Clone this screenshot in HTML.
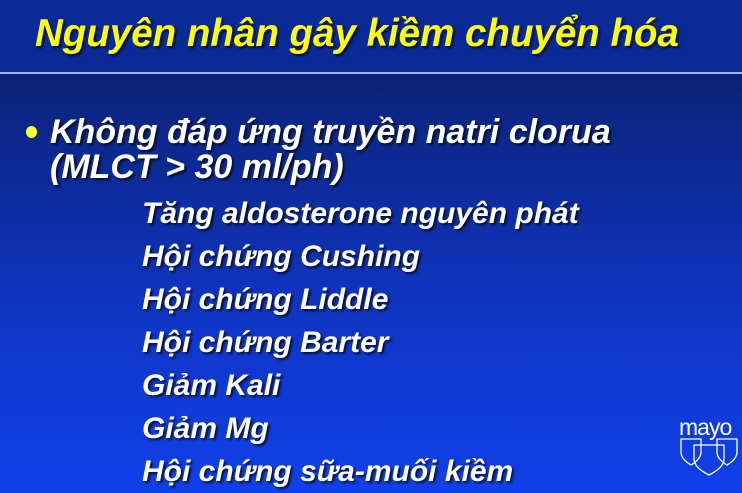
<!DOCTYPE html>
<html><head><meta charset="utf-8"><style>
html,body{margin:0;padding:0}
body{width:742px;height:493px;overflow:hidden;position:relative;font-family:"Liberation Sans",Arial,sans-serif;font-weight:bold;font-style:italic;
background:linear-gradient(#0a1f70 0px,#0a1f70 72px,#0b2580 100px,#0f34c0 300px,#1040ea 493px);}
.title{position:absolute;left:0;top:0;width:742px;height:72px;background:#0a2a98;}
.line{position:absolute;left:0;top:72px;width:742px;height:2px;background:#9fb4f0;}
.t{position:absolute;white-space:nowrap;text-shadow:2px 2px 2px rgba(0,0,0,.7);}
.h{left:35px;top:12px;font-size:38.5px;color:#ffff00;}
.b{left:50px;font-size:34px;color:#fff;}
.s{left:142px;font-size:30px;color:#fff;}
.dot{position:absolute;left:26px;top:126px;width:11px;height:12px;border-radius:50%;background:#ffff33;}
</style></head><body>
<div class="title"></div><div class="line"></div>
<div class="t h">Nguyên nhân gây kiềm chuyển hóa</div>
<div class="dot"></div>
<div class="t b" style="top:113px">Không đáp ứng truyền natri clorua</div>
<div class="t b" style="top:148px">(MLCT &gt; 30 ml/ph)</div>
<div class="t s" style="top:197px">Tăng aldosterone nguyên phát</div>
<div class="t s" style="top:240px">Hội chứng Cushing</div>
<div class="t s" style="top:283px">Hội chứng Liddle</div>
<div class="t s" style="top:326px">Hội chứng Barter</div>
<div class="t s" style="top:369px">Giảm Kali</div>
<div class="t s" style="top:412px">Giảm Mg</div>
<div class="t s" style="top:455px">Hội chứng sữa-muối kiềm</div>
<div style="position:absolute;left:679px;top:414px;font:normal 23px 'Liberation Sans',sans-serif;color:#fff;letter-spacing:-1px">mayo</div>
<svg style="position:absolute;left:680px;top:438px" width="58" height="38" viewBox="0 0 58 38" fill="none" stroke="#fff" stroke-width="1.3">
<path d="M1 1h20v13c0 6-5 10-10 13c-5-3-10-7-10-13z"/>
<path d="M37 1h20v13c0 6-5 10-10 13c-5-3-10-7-10-13z"/>
<path d="M14 7h30v14c0 7-7 12-15 16c-8-4-15-9-15-16z"/>
</svg>
</body></html>
